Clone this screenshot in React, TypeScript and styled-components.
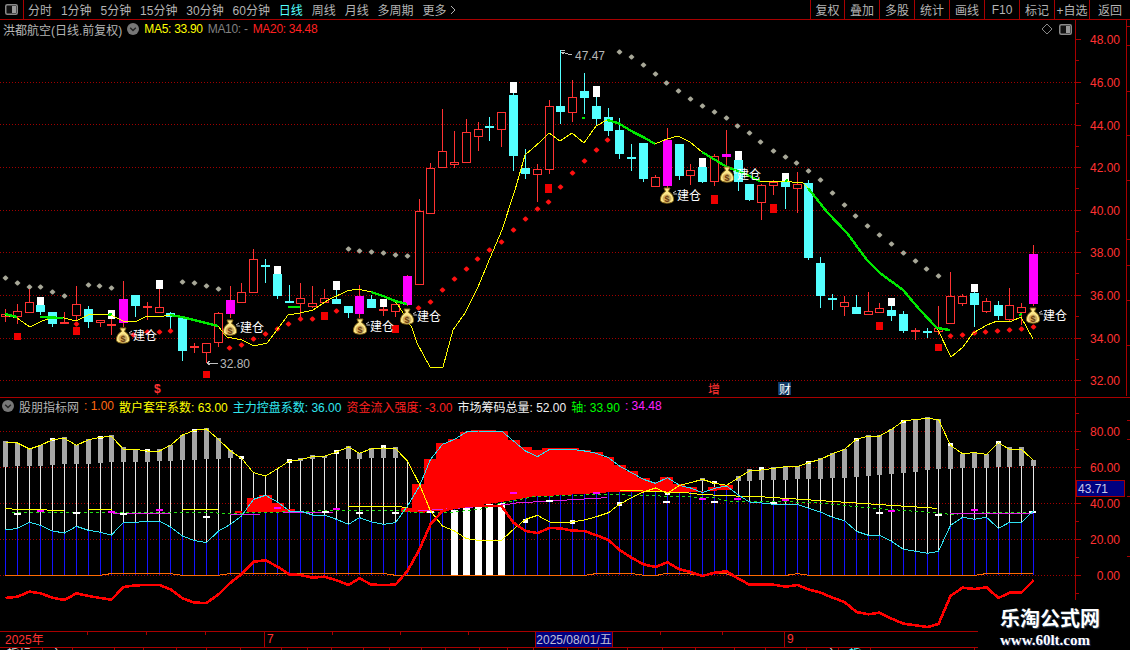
import React from "react";
import styled, { createGlobalStyle } from "styled-components";

const LINE = "#a80000";
const RED = "#ff3232";
const CYAN = "#54ffff";
const SANS = `"Liberation Sans", "Noto Sans CJK SC", sans-serif`;

const Global = createGlobalStyle`
  html, body { margin: 0; padding: 0; background: #000; }
  #root { width: 1130px; height: 650px; }
`;

const Page = styled.div`
  position: relative;
  width: 1130px;
  height: 650px;
  overflow: hidden;
  background: #000;
  font-family: ${SANS};
  font-size: 12px;
  display: flex;
  flex-direction: column;
`;

const Toolbar = styled.div`
  flex: none;
  height: 19px;
  display: flex;
  align-items: center;
  border-bottom: 1px solid ${LINE};
  color: #b4b4b4;
`;
const ToggleCell = styled.div`
  flex: none;
  width: 23px;
  height: 19px;
  display: flex;
  align-items: center;
  justify-content: center;
  border-right: 1px solid ${LINE};
`;
const Tabs = styled.div`
  display: flex;
  align-items: center;
  gap: 8.9px;
  padding-left: 4px;
`;
const Tab = styled.span<{ $active?: boolean }>`
  color: ${(p) => (p.$active ? CYAN : "#b4b4b4")};
  white-space: nowrap;
  display: inline-flex;
  align-items: center;
  gap: 4px;
`;
const Actions = styled.div`
  margin-left: auto;
  display: flex;
  height: 19px;
`;
const Action = styled.div<{ $w: number }>`
  flex: none;
  width: ${(p) => p.$w}px;
  box-sizing: border-box;
  border-left: 1px solid ${LINE};
  display: flex;
  align-items: center;
  justify-content: center;
  white-space: nowrap;
`;

const Panel = styled.section<{ $h: number; $divider?: boolean }>`
  position: relative;
  flex: none;
  height: ${(p) => p.$h}px;
  display: grid;
  grid-template-columns: 1075px 55px;
  border-bottom: ${(p) => (p.$divider ? `1px solid ${LINE}` : "none")};
`;
const ChartSvg = styled.svg`
  display: block;
  shape-rendering: crispEdges;
`;
const ChartText = styled.text`
  font-family: ${SANS};
  font-size: 12px;
`;
const BagGlyph = styled.text`
  font-family: ${SANS};
  font-size: 9px;
  font-weight: 700;
`;
const Legend = styled.div<{ $h: number; $left: number; $gap: number }>`
  position: absolute;
  top: 0;
  left: ${(p) => p.$left}px;
  height: ${(p) => p.$h}px;
  display: flex;
  align-items: center;
  gap: ${(p) => p.$gap}px;
  white-space: nowrap;
`;
const LegendItem = styled.span<{ $c: string; $tight?: boolean }>`
  color: ${(p) => p.$c};
  letter-spacing: ${(p) => (p.$tight ? "-0.3px" : "normal")};
`;
const CornerTools = styled.div`
  position: absolute;
  top: 3px;
  left: 1041px;
  display: flex;
  align-items: center;
  gap: 6px;
`;
const ValueBadge = styled.div`
  position: absolute;
  left: 1076px;
  top: 82px;
  width: 49px;
  height: 17px;
  box-sizing: border-box;
  background: #000080;
  border: 1px solid ${LINE};
  color: #c8c8e8;
  display: flex;
  align-items: center;
  padding-left: 1px;
`;

const TimeAxis = styled.div`
  position: relative;
  flex: none;
  height: 15px;
  display: flex;
  border-top: 1px solid ${LINE};
  border-bottom: 1px solid ${LINE};
  color: ${RED};
`;
const TimeCell = styled.div<{ $w: number; $pad?: number }>`
  flex: none;
  width: ${(p) => p.$w}px;
  box-sizing: border-box;
  display: flex;
  align-items: center;
  padding: 0 0 2px ${(p) => p.$pad ?? 2}px;
  border-right: 1px solid ${LINE};
`;
const TimeTail = styled.div`
  flex: 1;
  display: flex;
  align-items: center;
  padding: 0 0 2px 2px;
`;
const DateCell = styled.div`
  flex: none;
  width: 78px;
  margin-left: -1px;
  padding-bottom: 2px;
  box-sizing: border-box;
  display: flex;
  align-items: center;
  justify-content: center;
  background: #000080;
  border-left: 1px solid ${LINE};
  border-right: 1px solid ${LINE};
  color: #c0c0d8;
  white-space: nowrap;
`;
const TickLayer = styled.svg`
  position: absolute;
  top: 0;
  left: 0;
  shape-rendering: crispEdges;
`;
const BottomTabs = styled.div`
  flex: none;
  height: 3px;
  display: flex;
  overflow: hidden;
`;
const BottomTab = styled.div<{ $w: number; $c?: string; $pad: number }>`
  flex: none;
  width: ${(p) => p.$w}px;
  box-sizing: border-box;
  border-right: 1px solid ${LINE};
  color: ${(p) => p.$c || "#ddd"};
  line-height: 13px;
  padding-left: ${(p) => p.$pad}px;
  white-space: nowrap;
  overflow: hidden;
`;
const Watermark = styled.div`
  position: absolute;
  right: 0;
  bottom: 0;
  width: 152px;
  height: 50px;
  background: #000;
  display: flex;
  flex-direction: column;
  align-items: flex-start;
  padding: 5px 0 0 22px;
  box-sizing: border-box;
  color: #fff;
`;
const MarkTitle = styled.div`
  font-family: "Noto Sans CJK SC", sans-serif;
  font-weight: 700;
  font-size: 20px;
  line-height: 26px;
  white-space: nowrap;
  text-shadow: 1px 1px 1px #345;
`;
const MarkUrl = styled.div`
  font-family: "Liberation Serif", serif;
  font-weight: 700;
  font-size: 15px;
  line-height: 16px;
  margin-top: 1px;
  white-space: nowrap;
  text-shadow: 1px 1px 1px #236;
`;

type Candle = [number, number, number, number, "r" | "f" | "c" | "m", number?, number?];
const CANDLES: Candle[] = [
  [309,314,317,322,"r"],[304,311,317,324,"r"],[289,302,313,313,"r"],[305,305,312,315,"c",297,305],
  [312,312,324,327,"c"],[312,322,324,324,"f"],[286,304,316,320,"r"],[306,309,322,328,"c"],
  [320,320,323,327,"r"],[310,324,325,335,"f",310,319],[281,299,323,327,"m"],[295,295,306,317,"c"],
  [302,306,307,320,"f"],[289,307,313,313,"r",280,289],[312,313,317,330,"c"],[318,318,351,361,"c"],
  [343,346,347,353,"f"],[343,343,353,363,"r"],[312,313,343,347,"r"],[286,300,314,318,"m"],
  [283,292,303,303,"r"],[249,259,293,293,"r"],[259,265,267,283,"c"],[274,274,296,299,"c",266,274],
  [285,301,302,303,"c"],[283,298,304,317,"r"],[286,303,307,308,"r"],[289,298,303,303,"r"],
  [290,299,304,304,"c",281,290],[306,306,313,318,"c"],[285,296,314,318,"m"],[295,299,308,308,"c"],
  [307,309,310,316,"f",299,307],[304,304,312,317,"r"],[275,276,305,306,"m"],[199,211,285,285,"r"],
  [163,168,214,214,"r"],[109,151,168,168,"r"],[131,162,165,168,"r"],[119,132,163,163,"r"],
  [122,129,137,151,"r"],[117,126,127,141,"c"],[112,112,130,147,"r"],[93,95,156,171,"c",82,93],
  [149,168,174,179,"c"],[164,169,175,202,"r"],[100,106,170,174,"r"],[50,106,112,124,"c"],
  [80,97,113,122,"r"],[73,91,98,114,"c"],[97,106,119,126,"c",86,97],[108,117,131,136,"c"],
  [118,130,154,159,"c"],[144,157,158,171,"c"],[143,143,179,182,"c"],[175,177,187,187,"r"],
  [128,140,186,190,"m"],[144,144,176,180,"c"],[164,170,176,185,"r"],[167,167,182,183,"c",158,167],
  [154,156,182,186,"r"],[130,154,157,168,"m"],[160,160,182,191,"c",151,160],[184,184,200,201,"c"],
  [184,185,203,220,"r"],[180,182,186,195,"r"],[181,181,187,209,"c",173,181],[172,184,189,213,"r"],
  [180,183,258,260,"c"],[257,263,296,308,"c"],[294,298,300,310,"c"],[296,302,307,316,"r"],
  [295,307,314,314,"c"],[292,311,315,315,"r"],[303,308,313,313,"r"],[306,310,316,321,"c",298,306],
  [311,314,331,333,"c"],[328,330,331,340,"f"],[328,331,333,338,"c"],[306,328,332,335,"r"],
  [272,296,324,324,"r"],[294,296,304,306,"r"],[292,293,305,327,"c",284,292],[298,301,312,313,"r"],
  [301,305,316,320,"c"],[288,305,320,321,"r"],[303,307,313,325,"r"],[245,254,304,306,"m"],
];
const cx = (i: number) => Math.round(5 + 11.816 * i);

const GRAY_DOTS = "5,278 17,283 29,287 40,287 52,292 64,296 88,285 99,286 111,288 182,282 194,283 206,286 218,289 348,249 359,251 371,252 383,253 395,255 407,256 619,52 631,57 643,65 655,74 666,83 678,91 690,99 702,106 714,112 726,118 737,126 749,133 760,142 773,151 785,157 796,163 808,171 820,180 832,193 844,205 855,216 867,226 879,235 891,244 903,253 915,261 926,269 938,276";
const RED_DOTS = "76,324 133,335 147,332 159,332 170,331 229,348 241,345 253,339 265,334 277,329 288,324 300,319 312,319 336,311 418,308 430,302 442,290 454,279 466,269 477,259 489,250 501,242 513,230 525,219 537,209 548,202 560,187 572,173 584,161 596,150 607,140 950,336 962,335 974,333 985,332 997,331 1009,330 1021,329 1033,327";
const SQUARES = [[14,333,7,7],[73,327,7,8],[321,312,7,8],[392,325,7,8],[203,371,7,7],[545,184,7,9],[711,195,7,9],[770,204,7,9],[876,322,7,8],[935,344,7,7]];
const pairs = (s: string) => s.split(" ").map((p) => p.split(",").map(Number));

const YELLOW = "5,315 17,318 30,327 42,321 53,317 64,318 76,321 88,315 100,314 111,315 123,321 135,322 147,316 159,317 170,315 182,317 194,320 206,323 218,326 227,337 242,340 254,346 267,343 277,330 288,315 300,313 313,310 328,300 347,291 358,289 371,292 383,296 395,301 400,308 412,328 417,343 430,367 443,367 453,330 465,313 478,287 490,258 502,230 515,190 525,155 540,142 549,133 560,141 572,133 584,143 596,126 607,120 618,123 633,132 645,138 655,144 667,139 678,136 690,142 702,152 712,158 727,167 743,173 760,181 780,181 803,183 808,188 827,212 847,233 867,260 880,273 903,290 920,310 937,328 951,357 963,347 973,333 987,325 997,321 1010,322 1021,317 1033,339";
const GREENS = [
  "5,314 17,317", "40,317 63,318", "108,315 112,314", "170,315 182,317 194,320 206,323 218,326",
  "288,307 300,307", "371,292 383,296 395,301 407,304", "582,118 585,118",
  "607,120 618,123 633,132 645,138 655,144", "702,152 712,158 727,167 743,173 760,181",
  "785,181 788,180", "808,188 827,212 847,233 867,260 880,273 903,290 920,310 937,328 950,330", "1019,315 1022,314",
];
const BAGS = [[123,336],[230,328],[360,327],[407,317],[667,196],[727,175],[1033,316]];

// values below are read at 3x, y offset 395
const zy = (v: number) => v / 3 + 395;
const CY_LINE = [402,397,379,388,405,411,391,403,409,417,379,379,376,376,393,420,434,440,405,385,360,310,298,318,345,345,357,357,370,385,365,378,385,380,330,270,190,145,130,108,105,105,105,135,165,182,160,160,160,165,172,185,210,230,250,262,245,268,276,290,277,270,297,318,321,325,325,325,337,348,364,374,406,418,418,436,460,466,472,466,388,364,370,364,397,379,379,345];
const YE_LINE = [138,141,159,148,131,127,148,131,124,121,160,160,165,165,148,117,103,99,130,165,187,230,240,218,195,191,182,181,168,153,172,158,156,158,195,265,345,390,405,428,433,433,433,400,370,358,378,380,378,372,362,350,325,305,288,276,292,268,260,250,262,268,245,225,222,217,212,212,200,190,173,160,130,120,120,100,75,70,68,70,148,173,170,175,140,160,160,193];
const RD_LINE = [606,602,587,592,605,612,592,600,606,611,573,568,567,567,580,607,620,621,595,560,535,497,493,512,535,537,545,542,553,567,547,566,567,566,525,460,385,345,335,330,330,330,330,380,405,411,396,397,404,405,418,432,462,485,505,513,499,520,528,540,530,526,548,566,566,566,572,567,580,590,605,618,648,655,650,668,683,688,693,684,600,575,579,574,606,590,590,553];
const poly = (vals: number[]) => vals.map((v, i) => `${cx(i) + 0.5},${zy(v)}`).join(" ");

type Box = [number, number, number, number];
const GRAY_BOXES: Box[] = [
  [0,135,212,0],[1,142,209,0],[2,155,209,0],[3,148,209,0],[4,127,207,1],[5,123,204,0],[6,147,204,0],[7,130,204,0],
  [8,120,201,1],[9,117,198,0],[10,153,198,0],[11,160,198,0],[12,159,198,1],[13,160,195,0],[14,147,195,0],[15,117,192,0],
  [16,99,192,1],[17,96,189,0],[18,126,189,0],[19,162,186,0],[20,180,190,2],[24,190,200,2],[25,187,195,0],[26,178,188,0],
  [27,180,187,0],[28,162,174,2],[29,150,189,0],[30,172,189,0],[31,157,186,0],[32,147,186,1],[33,153,186,0],
  [36,343,351,2],[44,370,380,2],[48,373,383,2],[52,319,329,2],[56,288,298,2],[59,247,255,0],[60,255,265,2],[62,240,255,0],[63,220,255,0],
  [64,214,252,1],[65,213,252,0],[66,211,252,0],[67,211,249,0],[68,196,249,1],[69,187,249,0],[70,172,246,0],[71,160,246,0],
  [72,127,243,1],[73,118,240,0],[74,118,237,0],[75,100,234,0],[76,73,231,1],[77,70,228,0],[78,64,222,0],[79,70,219,0],
  [80,142,219,1],[81,175,216,0],[82,169,216,0],[83,175,216,0],[84,136,213,1],[85,154,213,0],[86,154,210,0],[87,193,210,0],
];
const WHITE_BARS: [number, number][] = [[38,342],[39,335],[40,327],[41,325],[42,320]];

const z = (o: number) => (x: number) => x / 3 + o;
const z6 = z(0), z7 = z(380), z8 = z(750);
const steps7: [number, number, number][] = [[63,96,335],[96,132,264],[132,168,190],[168,204,141],[204,240,129],[240,273,108],[273,348,102],[348,384,105],[384,420,132],[420,456,153],[456,486,162],[486,597,156],[597,633,162],[633,669,168],[669,702,183],[702,738,207],[738,774,225],[774,810,246],[810,840,258],[840,879,243],[879,915,264],[915,951,273],[951,984,285],[984,1020,273],[1020,1059,267]];
const stepPath = (st: [number, number, number][], f: (x: number) => number, bottom: [number, number][]) => {
  let d = "";
  st.forEach(([a, b, y], i) => {
    d += `${i === 0 ? "M" : "L"}${f(a)} ${zy(y)} L${f(b)} ${zy(y)} `;
  });
  [...bottom].reverse().forEach(([x, y]) => (d += `L${f(x)} ${zy(y)} `));
  return d + "Z";
};
const AREA_MAIN = stepPath(steps7, z7, [[63,348],[132,350],[230,338],[350,320],[460,302],[640,292],[700,288],[860,288],[950,288],[1059,280]]);
const AREA_BUMP = stepPath([[741,777,306],[777,815,297],[815,851,321],[851,885,340]], z6, [[741,348],[885,348]]);

const ORANGE: [(x: number) => number, number, number, number][] = [
  [z6,16,305,538],[z6,305,325,535],[z6,325,520,532],[z6,520,540,535],[z6,540,660,538],[z6,660,680,535],[z6,680,1140,532],[z7,0,20,532],[z7,20,40,535],[z7,40,620,538],[z7,620,640,535],[z7,640,765,532],[z7,765,785,535],[z7,785,835,538],
  [z7,835,850,535],[z7,850,930,532],[z7,930,950,535],[z7,950,980,538],[z7,980,990,535],[z7,990,1040,532],[z7,1040,1050,535],[z7,1050,1140,538],[z8,0,115,538],[z8,115,135,535],[z8,135,150,532],[z8,150,170,535],[z8,170,680,538],[z8,680,700,535],[z8,700,850,532],
];
const MID_YELLOW: [(x: number) => number, number, number, number, number][] = [
  [z6,16,36,337,337],[z6,36,140,341,341],[z6,140,193,343,343],[z6,265,335,340,340],[z6,547,655,340,340],[z6,1045,1140,331,331],
  [z7,0,65,331,331],[z7,65,85,335,335],[z7,718,950,282,292],[z7,950,1140,295,303],[z8,0,560,300,337],
];
const MID_MAGENTA: [(x: number) => number, number, number, number, number][] = [
  [z6,340,510,352,352],[z6,690,780,355,355],[z6,850,1000,349,349],[z7,115,390,345,325],[z7,390,680,322,305],[z8,600,850,353,353],
];
const DASH_GREEN = [
  ...[[36,350],[500,348],[700,352],[950,345],[1140,343]].map(([x, y]) => [z6(x), zy(y)]),
  ...[[60,343],[100,350],[200,350],[300,340],[350,325],[460,302],[680,295],[840,300],[1000,305],[1040,315],[1140,315]].map(([x, y]) => [z7(x), zy(y)]),
  ...[[200,320],[350,335],[550,350],[600,355],[720,350],[850,350]].map(([x, y]) => [z8(x), zy(y)]),
].map((p) => p.join(",")).join(" ");
const MARKS: [(x: number) => number, number, number, string][] = [
  [z6,42,353,"#fff"],[z6,220,351,"#fff"],[z6,360,353,"#fff"],[z6,610,362,"#fff"],[z6,965,347,"#fff"],[z6,1068,351,"#fff"],
  [z6,112,344,"#f0f"],[z6,324,348,"#f0f"],[z6,468,341,"#f0f"],[z6,822,336,"#f0f"],[z6,1000,340,"#f0f"],[z6,705,349,"#f00"],
  [z7,36,351,"#fff"],[z7,140,349,"#fff"],[z7,498,316,"#fff"],[z7,850,318,"#fff"],[z7,994,318,"#fff"],
  [z7,390,291,"#f0f"],[z7,640,291,"#f0f"],[z7,958,309,"#f0f"],[z7,1062,309,"#f0f"],
  [z8,60,320,"#fff"],[z8,378,351,"#fff"],[z8,555,356,"#fff"],[z8,838,348,"#fff"],[z8,96,313,"#f0f"],[z8,414,344,"#f0f"],[z8,663,342,"#f0f"],
];

const ToggleIcon = () => (
  <svg width="13" height="11" viewBox="0 0 13 11">
    <rect x="0.75" y="0.75" width="11.5" height="9.5" rx="1.5" fill="#111" stroke="#8a8a8a" strokeWidth="1.5" />
    <rect x="7" y="2" width="4" height="7" fill="#9a9a9a" />
  </svg>
);
const CollapseIcon = () => (
  <svg width="12" height="12" viewBox="0 0 12 12">
    <circle cx="6" cy="6" r="6" fill="#777" />
    <path d="M3.2 4.8 L6 7.6 L8.8 4.8" fill="none" stroke="#222" strokeWidth="1.4" />
  </svg>
);
const MoreIcon = () => (
  <svg width="6" height="10" viewBox="0 0 6 10">
    <path d="M1 1 L5 5 L1 9" fill="none" stroke="#b4b4b4" />
  </svg>
);
const DiamondIcon = () => (
  <svg width="12" height="12" viewBox="0 0 12 12">
    <path d="M6 1 L11 6 L6 11 L1 6 Z" fill="none" stroke="#888" />
  </svg>
);

const Diamonds: React.FC<{ data: string; fill: string }> = ({ data, fill }) => (
  <g fill={fill}>
    {pairs(data).map(([x, y], i) => (
      <polygon
        key={i}
        points={`${x},${y - 2.5} ${x + 1},${y - 2.5} ${x + 3.5},${y} ${x + 1},${y + 2.5} ${x},${y + 2.5} ${x - 2.5},${y}`}
        shapeRendering="auto"
      />
    ))}
  </g>
);

const Bag: React.FC<{ x: number; y: number }> = ({ x, y }) => (
  <g transform={`translate(${x},${y})`}>
    <g shapeRendering="auto">
      <path d="M-3 -8 L3 -8 L1.5 -4.5 C5 -2.5 7 1 6.5 4.5 C6 8 -6 8 -6.5 4.5 C-7 1 -5 -2.5 -1.5 -4.5 Z" fill="#fbe68a" stroke="#8a6a18" />
      <ellipse cx="0" cy="2.5" rx="4.4" ry="4" fill="#d4b060" />
      <path d="M6 -3 L9 -5 M6.5 -2 L10 -2" stroke="#fff" strokeWidth="0.8" />
    </g>
    <BagGlyph x="0" y="5.5" textAnchor="middle" fill="#6a3c10">$</BagGlyph>
    <ChartText x="10" y="4" fill="#fff">建仓</ChartText>
  </g>
);

const dotted = { stroke: "#a00000", strokeDasharray: "1 2" };

const PriceChart = () => (
  <ChartSvg width="1075" height="376" viewBox="0 20 1075 376">
    {[82, 124, 167, 210, 252, 295, 338, 380].map((y) => (
      <line key={y} x1="0" x2="1075" y1={y + 0.5} y2={y + 0.5} {...dotted} />
    ))}
    <Diamonds data={GRAY_DOTS} fill="#a8a898" />
    {CANDLES.map(([hi, top, bot, lo, kind, capA, capB], i) => {
      const x = cx(i);
      const wick = kind === "c" ? CYAN : RED;
      return (
        <g key={i}>
          <rect x={x} y={hi} width="1" height={Math.max(lo - hi, 1)} fill={wick} />
          {kind === "r" ? (
            <rect x={x - 3.5} y={top + 0.5} width="8" height={Math.max(bot - top - 1, 1)} fill="#000" stroke={RED} />
          ) : (
            <rect x={x - 4} y={top} width="9" height={Math.max(bot - top, 2)} fill={kind === "c" ? CYAN : kind === "m" ? "#ff00ff" : RED} />
          )}
          {capA !== undefined && <rect x={x - 3} y={capA} width="7" height={(capB as number) - capA} fill="#fff" />}
        </g>
      );
    })}
    <Diamonds data={RED_DOTS} fill="#ff1010" />
    {SQUARES.map(([x, y, w, h], i) => (
      <rect key={i} x={x} y={y} width={w} height={h} fill="#f00000" />
    ))}
    <polyline points={YELLOW} fill="none" stroke="#ffff00" />
    {GREENS.map((g, i) => (
      <polyline key={i} points={g} fill="none" stroke="#00e800" strokeWidth="2.4" />
    ))}
    {BAGS.map(([x, y]) => (
      <Bag key={x} x={x} y={y} />
    ))}
    <path d="M561 50 L565 50 M561 52 L572 55 M561 52 L564 54" stroke="#c0c0c0" fill="none" />
    <ChartText x="575" y="60" fill="#b8b8b8">47.47</ChartText>
    <path d="M207 363 L218 363 M207 363 L210 361 M207 363 L210 365" stroke="#c0c0c0" fill="none" />
    <ChartText x="220" y="368" fill="#b8b8b8">32.80</ChartText>
    <ChartText x="154" y="393" fill={RED} fontWeight="700">$</ChartText>
    <rect x="157" y="384" width="1" height="2" fill={RED} />
    <ChartText x="708" y="394" fill={RED}>增</ChartText>
    <rect x="778" y="382" width="13" height="13" fill="#123a66" />
    <ChartText x="779" y="394" fill="#fff">财</ChartText>
  </ChartSvg>
);

const PriceAxis = () => (
  <ChartSvg width="55" height="376" viewBox="1075 20 55 376">
    <rect x="1075" y="20" width="1" height="376" fill={LINE} />
    <rect x="1126" y="20" width="1" height="376" fill={LINE} />
    {[48, 46, 44, 42, 40, 38, 36, 34, 32].map((p) => {
      const y = Math.round(39.3 + (48 - p) * 21.31);
      return (
        <g key={p}>
          <rect x="1076" y={y} width="5" height="1" fill={LINE} />
          <ChartText x="1120" y={y + 5} textAnchor="end" fill={RED}>{p}.00</ChartText>
          {p > 32 && <rect x="1076" y={y + 21} width="3" height="1" fill={LINE} />}
        </g>
      );
    })}
    {[26, 45, 91, 135, 180, 239, 265, 300, 345].map((y) => (
      <rect key={y} x="1127" y={y} width="3" height="1" fill={LINE} />
    ))}
  </ChartSvg>
);

const IndicatorChart = () => (
  <ChartSvg width="1075" height="233" viewBox="0 397 1075 233">
    {[430, 466, 502, 538, 574].map((y) => (
      <line key={y} x1="0" x2="1075" y1={y + 0.5} y2={y + 0.5} {...dotted} />
    ))}
    {CY_LINE.map((v, i) => (
      <rect key={i} x={cx(i)} y={zy(v)} width="1" height={574 - zy(v)} fill="#1414ff" />
    ))}
    {CY_LINE.map((v, i) =>
      i <= 34 || i >= 59 ? (
        <rect key={i} x={cx(i)} y={zy(YE_LINE[i])} width="1" height={Math.max(zy(v) - zy(YE_LINE[i]), 0)} fill="#e8e8e8" />
      ) : null
    )}
    {GRAY_BOXES.map(([i, a, b, cap]) =>
      cap === 2 ? (
        <rect key={i} x={cx(i) - 2} y={zy(a)} width="5" height={(b - a) / 3} fill="#fff" />
      ) : (
        <g key={i}>
          <rect x={cx(i) - 2} y={zy(a)} width="5" height={(b - a) / 3} fill="#a6a6a6" />
          {cap === 1 && <rect x={cx(i) - 2} y={zy(a)} width="5" height="3" fill="#fff" />}
        </g>
      )
    )}
    <path d={AREA_MAIN} fill="#ff0000" />
    <path d={AREA_BUMP} fill="#ff0000" />
    {WHITE_BARS.map(([i, top]) => (
      <rect key={i} x={cx(i) - 3} y={zy(top)} width="7" height={574 - zy(top)} fill="#fff" />
    ))}
    {ORANGE.map(([f, a, b, y], i) => (
      <rect key={i} x={Math.round(f(a))} y={Math.round(zy(y))} width={Math.ceil((b - a) / 3)} height="1" fill="#ff6a00" />
    ))}
    <polyline points={DASH_GREEN} fill="none" stroke="#22e010" strokeDasharray="3 3" />
    {MID_YELLOW.map(([f, a, b, y1, y2], i) => (
      <line key={i} x1={f(a)} x2={f(b)} y1={zy(y1)} y2={zy(y2)} stroke="#ffff00" />
    ))}
    {MID_MAGENTA.map(([f, a, b, y1, y2], i) => (
      <line key={i} x1={f(a)} x2={f(b)} y1={zy(y1)} y2={zy(y2)} stroke="#e020e0" />
    ))}
    {MARKS.map(([f, x, y, c], i) => (
      <rect key={i} x={f(x)} y={zy(y) - 1} width="7" height="2" fill={c} />
    ))}
    <polyline points={poly(CY_LINE)} fill="none" stroke="#2ee0f0" />
    <polyline points={poly(YE_LINE)} fill="none" stroke="#ffff00" />
    <polyline points={poly(RD_LINE)} fill="none" stroke="#ff0000" strokeWidth="2.6" />
  </ChartSvg>
);

const IndicatorAxis = () => (
  <ChartSvg width="55" height="233" viewBox="1075 397 55 233">
    <rect x="1075" y="397" width="1" height="233" fill={LINE} />
    {[80, 60, 40, 20, 0].map((v) => {
      const y = 574 - v * 1.8;
      return (
        <g key={v}>
          <rect x="1076" y={y} width="5" height="1" fill={LINE} />
          <ChartText x="1120" y={y + 5} textAnchor="end" fill={RED}>{v.toFixed(2)}</ChartText>
          <rect x="1076" y={y + 18} width="3" height="1" fill={LINE} />
        </g>
      );
    })}
    <rect x="1076" y="412" width="3" height="1" fill={LINE} />
    {[419, 438, 495, 555].map((y) => (
      <rect key={y} x="1127" y={y} width="3" height="1" fill={LINE} />
    ))}
  </ChartSvg>
);

const TABS = ["分时", "1分钟", "5分钟", "15分钟", "30分钟", "60分钟", "日线", "周线", "月线", "多周期"];
const ACTIONS: [string, number][] = [["复权",34],["叠加",35],["多股",35],["统计",35],["画线",35],["F10",35],["标记",35],["+自选",35],["返回",41]];
const TICKS = [87, 146, 205, 332, 400, 468, 660, 722];
const CUTS = [43,73,115,144,177,207,241,282,308,332,364,390,422,446,480,508,534,568,599,628,663,696,735,766,807,839,871,975];
const CUT_TEXT: Record<number, [string, number, string?]> = { 0: ["指标", 7], 1: ["主", 7], 25: ["主", 18], 26: ["指", 10, CYAN] };

export default function App() {
  return (
    <Page>
      <Global />
      <Toolbar>
        <ToggleCell>
          <ToggleIcon />
        </ToggleCell>
        <Tabs>
          {TABS.map((t) => (
            <Tab key={t} $active={t === "日线"}>{t}</Tab>
          ))}
          <Tab>更多<MoreIcon /></Tab>
        </Tabs>
        <Actions>
          {ACTIONS.map(([t, w]) => (
            <Action key={t} $w={w}>{t}</Action>
          ))}
        </Actions>
      </Toolbar>

      <Panel $h={377} $divider>
        <PriceChart />
        <PriceAxis />
        <Legend $h={18} $left={3} $gap={5}>
          <LegendItem $c="#b4b4b4">洪都航空(日线.前复权)</LegendItem>
          <CollapseIcon />
          <LegendItem $c="#ffff00" $tight>MA5: 33.90</LegendItem>
          <LegendItem $c="#808080" $tight>MA10: -</LegendItem>
          <LegendItem $c="#ff2020" $tight>MA20: 34.48</LegendItem>
        </Legend>
        <CornerTools>
          <DiamondIcon />
          <ToggleIcon />
        </CornerTools>
      </Panel>

      <Panel $h={233}>
        <IndicatorChart />
        <IndicatorAxis />
        <Legend $h={16} $left={2} $gap={5}>
          <CollapseIcon />
          <LegendItem $c="#b4b4b4">股朋指标网</LegendItem>
          <LegendItem $c="#ff6a10">: 1.00</LegendItem>
          <LegendItem $c="#ffff00">散户套牢系数: 63.00</LegendItem>
          <LegendItem $c="#30e8f0">主力控盘系数: 36.00</LegendItem>
          <LegendItem $c="#ff2020">资金流入强度: -3.00</LegendItem>
          <LegendItem $c="#f0f0f0">市场筹码总量: 52.00</LegendItem>
          <LegendItem $c="#00ff00">轴: 33.90</LegendItem>
          <LegendItem $c="#ff20ff">: 34.48</LegendItem>
        </Legend>
        <ValueBadge>43.71</ValueBadge>
      </Panel>

      <TimeAxis>
        <TimeCell $w={265} $pad={5}>2025年</TimeCell>
        <TimeCell $w={271}>7</TimeCell>
        <DateCell>2025/08/01/五</DateCell>
        <TimeCell $w={172}>&nbsp;</TimeCell>
        <TimeTail>9</TimeTail>
        <TickLayer width="1130" height="3">
          {TICKS.map((x) => (
            <rect key={x} x={x} y="0" width="1" height="3" fill={LINE} />
          ))}
        </TickLayer>
      </TimeAxis>

      <BottomTabs>
        {CUTS.map((c, i) => (
          <BottomTab key={c} $w={c - (i ? CUTS[i - 1] : 0)} $c={CUT_TEXT[i]?.[2]} $pad={CUT_TEXT[i]?.[1] ?? 0}>
            {CUT_TEXT[i]?.[0]}
          </BottomTab>
        ))}
      </BottomTabs>

      <Watermark>
        <MarkTitle>乐淘公式网</MarkTitle>
        <MarkUrl>www.60lt.com</MarkUrl>
      </Watermark>
    </Page>
  );
}
